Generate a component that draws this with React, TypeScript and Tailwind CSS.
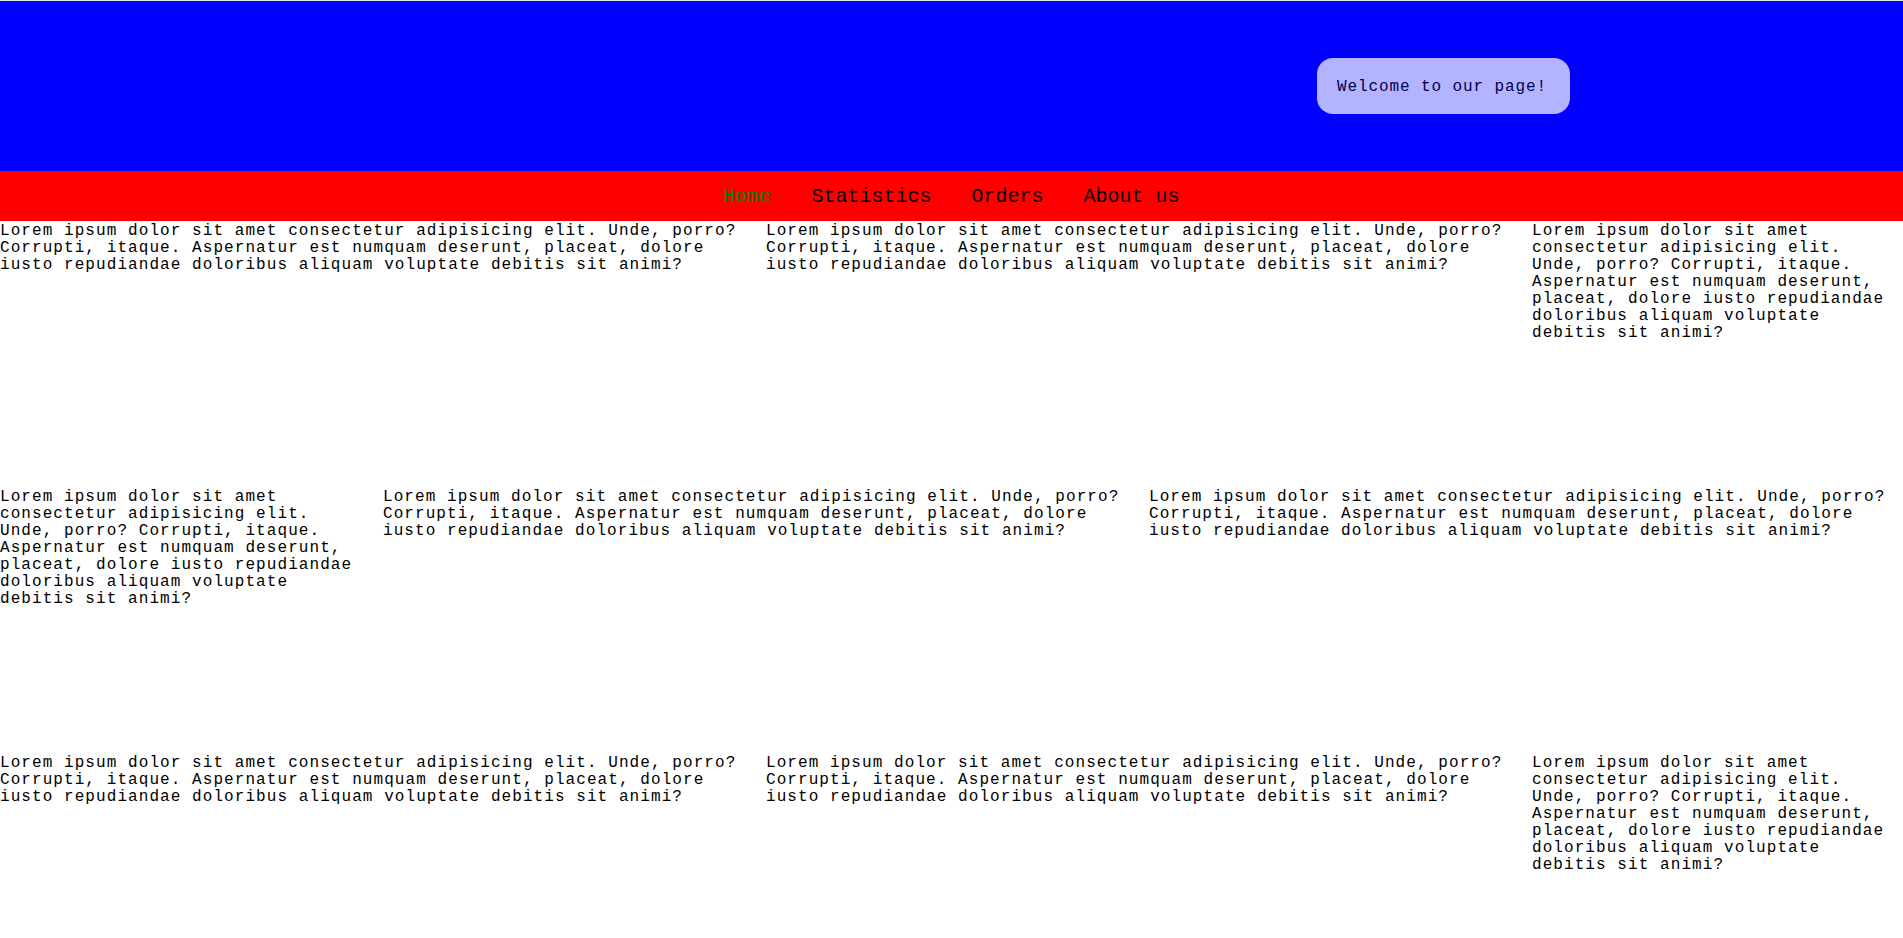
const LOREM =
  "Lorem ipsum dolor sit amet consectetur adipisicing elit. Unde, porro? Corrupti, itaque. Aspernatur est numquam deserunt, placeat, dolore iusto repudiandae doloribus aliquam voluptate debitis sit animi?";

const NAV_ITEMS = ["Home", "Statistics", "Orders", "About us"];

// span per card, row by row
const CARDS = [
  "col-span-2", "col-span-2", "col-span-1",
  "col-span-1", "col-span-2", "col-span-2",
  "col-span-2", "col-span-2", "col-span-1",
];

export default function App() {
  return (
    <div className="min-h-screen bg-white">
      <div className="h-px bg-[#e2e2e2]" />
      <header className="h-[170px] bg-[#0000ff] flex items-center justify-end pr-[333px]">
        <div className="h-[56px] w-[253px] flex items-center px-[20px] pt-[2px] rounded-[16px] bg-white opacity-70 text-black font-['Liberation_Mono',monospace] text-[16px] tracking-[0.9px] leading-none">
          Welcome to our page!
        </div>
      </header>

      <nav className="h-[50px] pt-[2px] bg-[#ff0000] flex items-center justify-center gap-[40px] font-['Liberation_Mono',monospace] text-[20px] leading-none">
        {NAV_ITEMS.map((item, i) => (
          <a
            key={item}
            href="#"
            className={i === 0 ? "text-[#008000]" : "text-black"}
          >
            {item}
          </a>
        ))}
      </nav>

      <main className="grid grid-cols-5 auto-rows-[254px] gap-[12px] font-['Liberation_Mono',monospace] text-[16px] tracking-[1.07px] leading-[17px] text-black">
        {CARDS.map((span, i) => (
          <section key={i} className={span}>
            <p className="pt-[2px]">{LOREM}</p>
          </section>
        ))}
      </main>
    </div>
  );
}
